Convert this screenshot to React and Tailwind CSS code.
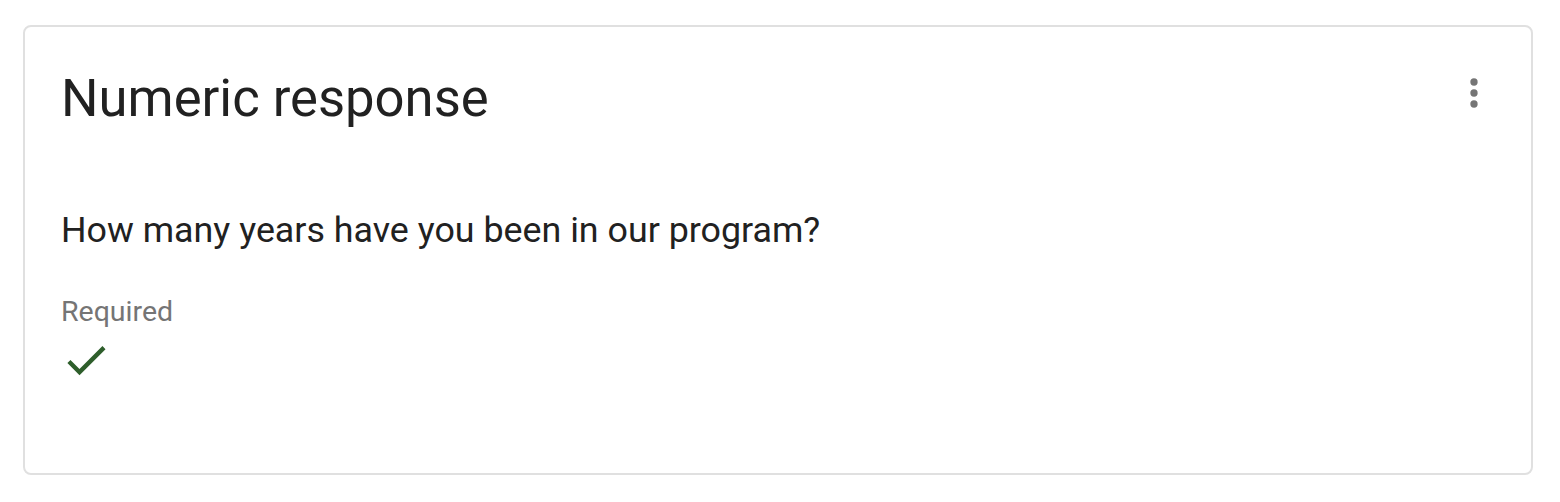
import React from 'react';

const MoreVert = () => (
    <svg viewBox="0 0 24 24" className="h-[44px] w-[44px]" fill="#757575">
        <circle cx="12" cy="6" r="2" />
        <circle cx="12" cy="12" r="2" />
        <circle cx="12" cy="18" r="2" />
    </svg>
);

const Check = () => (
    <svg viewBox="0 0 24 24" className="h-[52px] w-[52px]" fill="#2e5e2b">
        <path d="M9 16.17L4.83 12l-1.42 1.41L9 19 21 7l-1.41-1.41z" />
    </svg>
);

const App = () => {
    return (
        <div className="min-h-[502px] bg-white pl-[23px] pt-[25px]" style={{ fontFamily: 'Roboto, "Liberation Sans", sans-serif' }}>
            <div className="w-[1510px] rounded-[8px] border-2 border-[#e0e0e0] bg-white pl-[36px] pr-[35px] pt-[40px] pb-[87px]">
                {/* Header */}
                <div className="flex items-start justify-between">
                    <h2 className="text-[52.6px] leading-[1.2] font-normal text-[#212121]">Numeric response</h2>
                    <button className="mt-[4px]">
                        <MoreVert />
                    </button>
                </div>

                <p className="mt-[79px] text-[35.8px] leading-[1.2] text-[#212121]">
                    How many years have you been in our program?
                </p>

                <div className="mt-[43px] text-[28.5px] leading-[1.2] text-[#757575]">Required</div>
                <div className="mt-[5px] -ml-[1px]">
                    <Check />
                </div>
            </div>
        </div>
    );
};

export default App;
